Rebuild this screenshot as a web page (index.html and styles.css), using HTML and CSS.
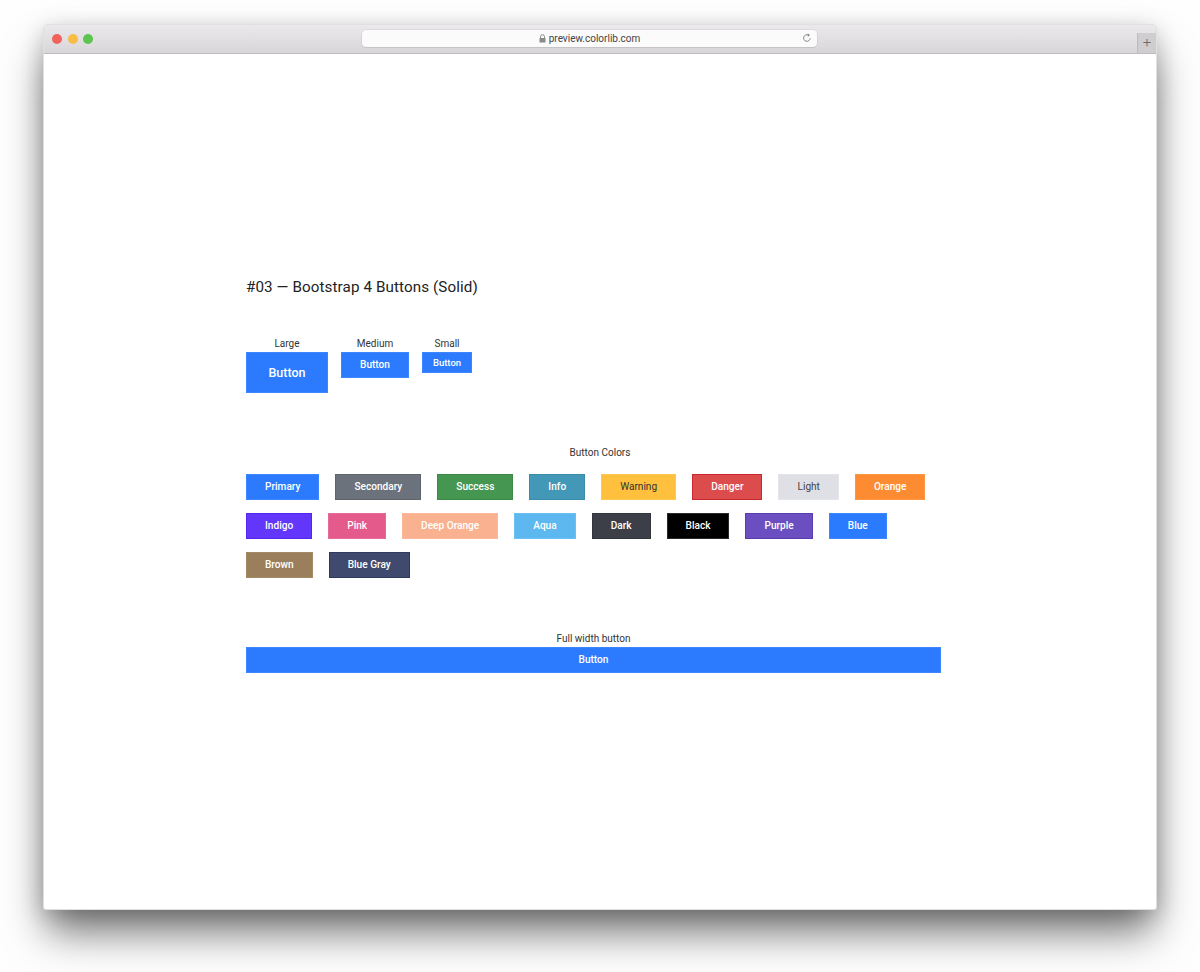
FILE: index.html
```html
<!DOCTYPE html>
<html lang="en">
<head>
  <meta charset="UTF-8" />
  <meta name="viewport" content="width=device-width, initial-scale=1.0"/>
  <title>Bootstrap 4 Buttons (Solid)</title>
  <link rel="stylesheet" href="styles.css">
</head>
<body>
  <div class="window">
    <div class="titlebar">
      <div class="lights">
        <span class="light red"></span>
        <span class="light yellow"></span>
        <span class="light green"></span>
      </div>
      <div class="urlbar">
        <span class="url">
          <svg class="lock" width="7" height="9" viewBox="0 0 7 9">
            <path d="M1.5 4V2.7a2 2 0 0 1 4 0V4" fill="none" stroke="#8a8a8a" stroke-width="1"/>
            <rect x="0.5" y="4" width="6" height="4.6" rx="0.6" fill="#8a8a8a"/>
          </svg>
          preview.colorlib.com
        </span>
        <svg class="reload" width="10" height="10" viewBox="0 0 10 10">
          <path d="M8.2 5.2A3.3 3.3 0 1 1 6.6 2.2" fill="none" stroke="#7a7a7a" stroke-width="0.9"/>
          <path d="M5.6 0.6L7.9 2.1L5.9 3.7Z" fill="#7a7a7a"/>
        </svg>
      </div>
      <div class="newtab">+</div>
    </div>

    <main class="demo">
      <h2>#03 — Bootstrap 4 Buttons (Solid)</h2>

      <section class="sizes">
        <div class="size-item">
          <span class="label">Large</span>
          <a class="btn btn-primary btn-lg">Button</a>
        </div>
        <div class="size-item">
          <span class="label">Medium</span>
          <a class="btn btn-primary btn-md">Button</a>
        </div>
        <div class="size-item">
          <span class="label">Small</span>
          <a class="btn btn-primary btn-sm">Button</a>
        </div>
      </section>

      <section class="colors">
        <p class="label colors-title">Button Colors</p>
        <div class="color-list">
          <a class="btn btn-primary">Primary</a>
          <a class="btn btn-secondary">Secondary</a>
          <a class="btn btn-success">Success</a>
          <a class="btn btn-info">Info</a>
          <a class="btn btn-warning">Warning</a>
          <a class="btn btn-danger">Danger</a>
          <a class="btn btn-light">Light</a>
          <a class="btn btn-orange">Orange</a>
          <a class="btn btn-indigo">Indigo</a>
          <a class="btn btn-pink">Pink</a>
          <a class="btn btn-deep-orange">Deep Orange</a>
          <a class="btn btn-aqua">Aqua</a>
          <a class="btn btn-dark">Dark</a>
          <a class="btn btn-black">Black</a>
          <a class="btn btn-purple">Purple</a>
          <a class="btn btn-blue">Blue</a>
          <a class="btn btn-brown">Brown</a>
          <a class="btn btn-blue-gray">Blue Gray</a>
        </div>
      </section>

      <section class="full">
        <p class="label">Full width button</p>
        <a class="btn btn-primary btn-block">Button</a>
      </section>
    </main>
  </div>
</body>
</html>
```

FILE: styles.css
```css
* {
  box-sizing: border-box;
  margin: 0;
  padding: 0;
}

body {
  font-family: 'Roboto', 'Liberation Sans', sans-serif;
  background: #fefefe;
  width: 1200px;
  height: 972px;
  overflow: hidden;
}

/* browser frame */
.window {
  width: 1114px;
  height: 886px;
  margin: 24px 0 0 43px;
  background: #fff;
  border-radius: 5px 5px 3px 3px;
  border: 1px solid rgba(0, 0, 0, 0.12);
  box-shadow: 0 26px 42px -4px rgba(0, 0, 0, 0.55), 0 4px 22px rgba(0, 0, 0, 0.18);
  overflow: hidden;
}

.titlebar {
  height: 29px;
  display: grid;
  grid-template-columns: 318px 455px 1fr;
  align-items: center;
  background: linear-gradient(#ebe9eb, #d8d6d8);
  border-bottom: 1px solid #bebcbe;
}

.lights {
  display: flex;
  gap: 5.7px;
  padding-left: 8px;
}

.light {
  width: 10px;
  height: 10px;
  border-radius: 50%;
}

.red { background: #f0625b; }
.yellow { background: #f7bd45; }
.green { background: #5bc54f; }

.urlbar {
  height: 17px;
  margin-top: -1px;
  background: #fbfbfb;
  border-radius: 4px;
  box-shadow: 0 0 0 0.5px rgba(0, 0, 0, 0.1), 0 1px 1px rgba(0, 0, 0, 0.06);
  display: flex;
  align-items: center;
  justify-content: center;
  position: relative;
  font-size: 10px;
  color: #444;
}

.url {
  display: flex;
  align-items: center;
  gap: 3px;
}

.reload {
  position: absolute;
  right: 5px;
  top: 3px;
}

.newtab {
  justify-self: end;
  align-self: end;
  width: 19px;
  height: 20px;
  background: #cfcdcf;
  border-left: 1px solid #bdbbbd;
  color: #6a6a6a;
  font-size: 15px;
  font-weight: 300;
  line-height: 19px;
  text-align: center;
}

/* demo content */
.demo {
  width: 898px;
  padding: 223px 0 0 202px;
  color: #222;
}

.demo h2 {
  font-size: 15.2px;
  font-weight: 400;
  line-height: 20px;
  letter-spacing: 0.1px;
  margin-bottom: 40px;
}

.label {
  font-size: 10px;
  line-height: 13px;
  color: #333;
}

.btn {
  display: inline-block;
  color: #fff;
  font-size: 10.1px;
  font-weight: 500;
  line-height: 24px;
  padding: 0 18px;
  border: 1px solid transparent;
  text-align: center;
  cursor: pointer;
}

.sizes {
  display: flex;
  gap: 13px;
}

.size-item {
  display: flex;
  flex-direction: column;
  align-items: center;
  gap: 2px;
}

.btn-lg {
  width: 82px;
  height: 41px;
  line-height: 39px;
  font-size: 12.5px;
  padding: 0;
}

.btn-md {
  width: 68px;
  height: 26px;
  padding: 0;
}

.btn-sm {
  width: 50px;
  height: 21px;
  line-height: 19px;
  font-size: 9.5px;
  padding: 0;
}

.colors {
  margin-top: 53px;
  width: 695px;
}

.colors-title {
  text-align: center;
  padding-left: 13px;
  margin-bottom: 15px;
}

.color-list {
  display: flex;
  flex-wrap: wrap;
  gap: 13px 16px;
}

.full {
  margin-top: 54px;
  width: 695px;
  text-align: center;
}

.full .label {
  margin-bottom: 2px;
}

.btn-block {
  display: block;
}

.btn-primary { background: #2c7bff; border-color: #3d86ff; }
.btn-secondary { background: #6c727c; border-color: #5f656e; }
.btn-success { background: #459650; border-color: #3d8a47; }
.btn-info { background: #4298b6; border-color: #3a8cab; }
.btn-warning { background: #ffc03e; border-color: #ffc94f; color: #333; font-weight: 400; }
.btn-danger { background: #dc4c4d; border-color: #c8292d; }
.btn-light { background: #dfe0e5; border-color: #e4e5e9; color: #444; font-weight: 400; }
.btn-orange { background: #fd8b31; border-color: #fd9640; }
.btn-indigo { background: #6237fb; border-color: #5525ef; }
.btn-pink { background: #e45a8a; border-color: #e6699a; }
.btn-deep-orange { background: #fab190; border-color: #fbb99b; }
.btn-aqua { background: #5db8ef; border-color: #6bbff2; }
.btn-dark { background: #3d3f48; border-color: #33353d; }
.btn-black { background: #000; border-color: #2a2a2a; }
.btn-purple { background: #6b4fc1; border-color: #5a3eb0; }
.btn-blue { background: #2b7bff; border-color: #3c86ff; }
.btn-brown { background: #9b7f5d; border-color: #a48965; }
.btn-blue-gray { background: #3f4a6e; border-color: #2f3a5d; }
```
